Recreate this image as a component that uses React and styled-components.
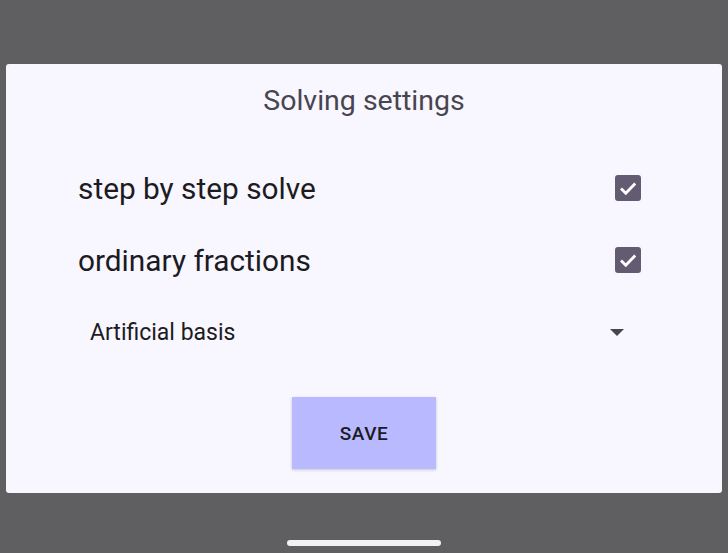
import React from "react";
import styled, { createGlobalStyle } from "styled-components";

const Global = createGlobalStyle`
  html, body {
    margin: 0;
    padding: 0;
    background: #5f5f61;
  }
  body {
    font-family: Roboto, "Noto Sans", sans-serif;
  }
`;

const Screen = styled.div`
  width: 728px;
  height: 553px;
  background: #5f5f61;
  display: flex;
  flex-direction: column;
  align-items: center;
  overflow: hidden;
`;

const Dialog = styled.div`
  margin-top: 64px;
  width: 716px;
  height: 429px;
  box-sizing: border-box;
  background: #f8f6fe;
  border-radius: 3px;
  display: flex;
  flex-direction: column;
  align-items: center;
`;

const Title = styled.h2`
  margin: 0;
  height: 72px;
  display: flex;
  align-items: center;
  font-size: 28.5px;
  font-weight: 400;
  color: #49454f;
`;

const Body = styled.div`
  width: 100%;
  box-sizing: border-box;
  padding: 16px 81px 0 72px;
  display: flex;
  flex-direction: column;
`;

const Row = styled.label`
  height: 72px;
  display: flex;
  align-items: center;
  justify-content: space-between;
`;

const RowText = styled.span`
  font-size: 29.8px;
  color: #1c1b1f;
`;

const Box = styled.span`
  width: 26px;
  height: 26px;
  border-radius: 3px;
  background: #625b71;
  display: flex;
  align-items: center;
  justify-content: center;
`;

const Select = styled.div`
  height: 72px;
  display: flex;
  align-items: center;
  justify-content: space-between;
  padding: 0 17px 0 12px;
`;

const SelectText = styled.span`
  font-size: 23px;
  color: #1c1b1f;
`;

const Arrow = styled.span`
  width: 0;
  height: 0;
  border-left: 7.5px solid transparent;
  border-right: 7.5px solid transparent;
  border-top: 7.5px solid #49454f;
`;

const SaveButton = styled.button`
  margin-top: 29px;
  width: 144px;
  height: 72px;
  border: none;
  border-radius: 0;
  background: #b9b9ff;
  box-shadow: 0 1px 3px rgba(0, 0, 0, 0.2);
  font-family: Roboto, sans-serif;
  font-size: 19px;
  font-weight: 500;
  color: #1c1b1f;
  letter-spacing: 0.5px;
`;

const Spacer = styled.div`
  flex: 1;
`;

const HomeBar = styled.div`
  width: 154px;
  height: 6px;
  border-radius: 3px;
  background: #f2f2f2;
  margin-bottom: 7px;
`;

const Check = () => (
  <svg width="26" height="26" viewBox="0 0 26 26">
    <path
      d="M6 13.5l4.8 4.8 9.4-9.8"
      fill="none"
      stroke="#fff"
      strokeWidth="2.8"
    />
  </svg>
);

export default function App() {
  return (
    <Screen>
      <Global />
      <Dialog>
        <Title>Solving settings</Title>
        <Body>
          <Row>
            <RowText>step by step solve</RowText>
            <Box>
              <Check />
            </Box>
          </Row>
          <Row>
            <RowText>ordinary fractions</RowText>
            <Box>
              <Check />
            </Box>
          </Row>
          <Select>
            <SelectText>Artificial basis</SelectText>
            <Arrow />
          </Select>
        </Body>
        <SaveButton>SAVE</SaveButton>
      </Dialog>
      <Spacer />
      <HomeBar />
    </Screen>
  );
}
